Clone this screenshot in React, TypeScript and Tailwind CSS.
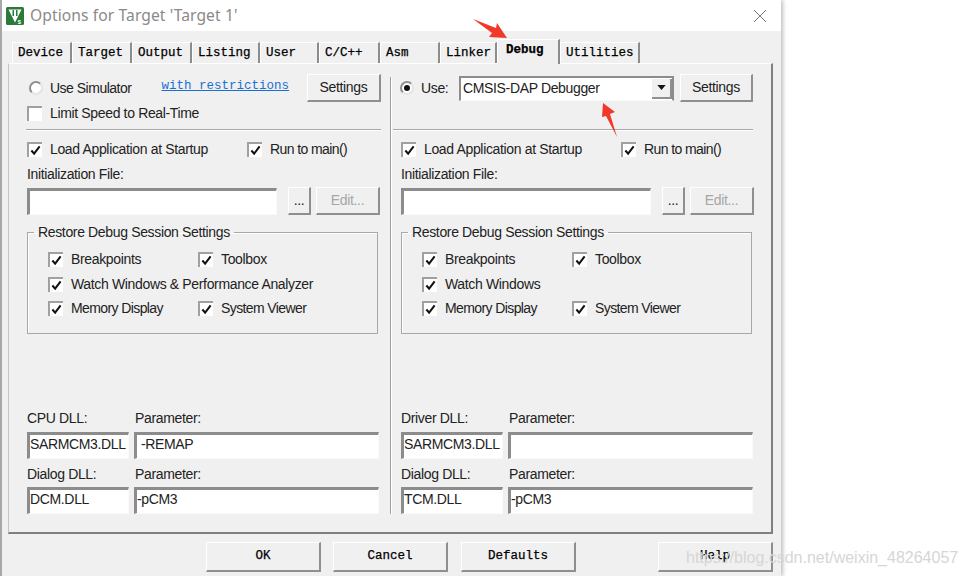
const ui = "font-['Liberation_Sans',Arial,sans-serif] text-[14px] tracking-[-0.35px] text-[#222]";
const mono = "font-['Liberation_Mono','Courier_New',monospace] text-[12.5px] text-black [-webkit-text-stroke:0.25px_#000]";

const tabs = [
  { name: "Device", w: "w-[60px]" },
  { name: "Target", w: "w-[60px]" },
  { name: "Output", w: "w-[60px]" },
  { name: "Listing", w: "w-[68px]" },
  { name: "User", w: "w-[59px]" },
  { name: "C/C++", w: "w-[61px]" },
  { name: "Asm", w: "w-[60px]" },
  { name: "Linker", w: "w-[57px]" },
  { name: "Debug", w: "w-[63px]", active: true },
  { name: "Utilities", w: "w-[80px]" },
];

function Tab({ name, w, active }: { name: string; w: string; active?: boolean }) {
  return (
    <div
      className={`${w} ${mono} flex items-center border-t border-l border-t-white border-l-white border-r-2 border-r-[#8c8c8c] ${
        active ? "relative z-10 h-[25px] -mb-px bg-[#f0f0f0] pb-[3px] pl-[8px] font-bold" : "h-[21px] pl-[5px]"
      }`}
    >
      {name}
    </div>
  );
}

function Check({ checked = true, tight, label }: { checked?: boolean; tight?: boolean; label: string }) {
  return (
    <label className={`${ui} ${tight ? "!tracking-[-0.6px]" : ""} flex items-center gap-[8px] whitespace-nowrap`}>
      <span className="flex h-[15px] w-[15px] shrink-0 items-center justify-center border-t-2 border-l-2 border-t-[#a0a0a0] border-l-[#a0a0a0] bg-white">
        {checked && (
          <svg viewBox="0 0 12 12" className="h-[11px] w-[11px]">
            <path d="M1.5 6 L4.5 9.5 L10.5 1.5" fill="none" stroke="#111" strokeWidth="2.2" />
          </svg>
        )}
      </span>
      {label}
    </label>
  );
}

function Radio({ on }: { on?: boolean }) {
  return (
    <span className="flex h-[14px] w-[14px] shrink-0 items-center justify-center rounded-full border-2 border-t-[#8f8f8f] border-l-[#8f8f8f] border-r-[#e4e4e4] border-b-[#e4e4e4] bg-white">
      {on && <span className="h-[6px] w-[6px] rounded-full bg-[#111]" />}
    </span>
  );
}

function Button({ className = "", font = ui, disabled, children }: { className?: string; font?: string; disabled?: boolean; children: React.ReactNode }) {
  return (
    <div
      className={`${font} ${disabled ? "!text-[#a6a6a6]" : ""} flex shrink-0 items-center justify-center border-t border-l border-t-white border-l-white border-r-2 border-b-2 border-r-[#8f8f8f] border-b-[#8f8f8f] ${className}`}
    >
      {children}
    </div>
  );
}

function Field({ className = "", value }: { className?: string; value?: string }) {
  return (
    <div
      className={`${ui} flex items-center overflow-hidden whitespace-nowrap border-t-[3px] border-l-[3px] border-t-[#8c8c8c] border-l-[#8c8c8c] border-r border-b border-r-[#fafafa] border-b-[#fafafa] bg-white pb-[4px] ${className}`}
    >
      {value}
    </div>
  );
}

function Rule({ className = "" }: { className?: string }) {
  return <div className={`h-[2px] border-t border-t-[#a8a8a8] bg-white ${className}`} />;
}

type DebugColumnProps = {
  head: React.ReactNode;
  watchLabel: string;
  firstDll: string;
  firstDllValue: string;
  firstParam?: string;
  dialogDllValue: string;
};

// one half of the Debug page: the simulator settings or the target driver settings
function DebugColumn({ head, watchLabel, firstDll, firstDllValue, firstParam, dialogDllValue }: DebugColumnProps) {
  return (
    <div className="flex w-[354px] shrink-0 flex-col">
      {head}
      <div className="mt-[10px] flex h-[16px] items-center">
        <div className="w-[220px]">
          <Check label="Load Application at Startup" />
        </div>
        <Check tight label="Run to main()" />
      </div>
      <div className={`${ui} mt-[9px] h-[16px] leading-[16px]`}>Initialization File:</div>
      <div className="mt-[5px] flex h-[28px] items-center">
        <Field className="h-[27px] w-[250px]" />
        <Button className="ml-[11px] h-[28px] w-[23px]">...</Button>
        <Button disabled className="ml-[5px] h-[28px] w-[64px]">Edit...</Button>
      </div>
      <fieldset className="mt-[9px] h-[110px] w-[351px] border border-[#a8a8a8] shadow-[inset_1px_1px_0_#fff]">
        <legend className={`${ui} ml-[6px] px-[4px] leading-[16px]`}>Restore Debug Session Settings</legend>
        <div className="pl-[20px]">
          <div className="mt-[11px] flex h-[16px] items-center">
            <div className="w-[150px]">
              <Check label="Breakpoints" />
            </div>
            <Check label="Toolbox" />
          </div>
          <div className="mt-[7px] h-[16px]">
            <Check label={watchLabel} />
          </div>
          <div className="mt-[10px] flex h-[16px] items-center">
            <div className="w-[150px]">
              <Check tight label="Memory Display" />
            </div>
            <Check tight label="System Viewer" />
          </div>
        </div>
      </fieldset>
      <div className={`${ui} mt-[76px] flex h-[16px] leading-[16px]`}>
        <span className="w-[108px]">{firstDll}</span>
        <span>Parameter:</span>
      </div>
      <div className="mt-[6px] flex h-[27px] gap-[5px]">
        <Field className="w-[102px]" value={firstDllValue} />
        <Field className={`w-[245px] ${firstParam ? "pl-[4px]" : ""}`} value={firstParam} />
      </div>
      <div className={`${ui} mt-[7px] flex h-[16px] leading-[16px]`}>
        <span className="w-[108px]">Dialog DLL:</span>
        <span>Parameter:</span>
      </div>
      <div className="mt-[5px] flex h-[27px] gap-[5px]">
        <Field className="w-[102px]" value={dialogDllValue} />
        <Field className="w-[245px]" value="-pCM3" />
      </div>
    </div>
  );
}

function SimulatorHead() {
  return (
    <>
      <div className="flex h-[28px] items-center">
        <span className="ml-[2px]">
          <Radio />
        </span>
        <span className={`${ui} !tracking-[-0.5px] ml-[7px] w-[112px]`}>Use Simulator</span>
        <span className={`${mono} !text-[#1a6fd0] [-webkit-text-stroke:0px] -mt-[3px] w-[146px] underline`}>with restrictions</span>
        <Button className="h-[28px] w-[74px]">Settings</Button>
      </div>
      <div className="mt-[1px] h-[16px]">
        <Check checked={false} label="Limit Speed to Real-Time" />
      </div>
      <Rule className="mt-[10px] -ml-[1px] w-[355px]" />
    </>
  );
}

function DriverHead() {
  return (
    <>
      <div className="-ml-[1px] flex h-[28px] items-center">
        <Radio on />
        <span className={`${ui} ml-[7px] w-[38px]`}>Use:</span>
        <div className="flex h-[25px] w-[215px] items-center border-t-2 border-l-2 border-t-[#8c8c8c] border-l-[#8c8c8c] border-r-2 border-b border-r-[#8c8c8c] border-b-[#fafafa] bg-white pl-[2px]">
          <span className={`${ui} flex-1`}>CMSIS-DAP Debugger</span>
          <div className="flex h-[20px] w-[20px] items-center justify-center border-r-2 border-b-2 border-r-[#8f8f8f] border-b-[#8f8f8f] bg-[#f0f0f0]">
            <svg viewBox="0 0 10 6" className="h-[5px] w-[9px]">
              <path d="M0 0 H10 L5 6 Z" fill="#111" />
            </svg>
          </div>
        </div>
        <Button className="ml-[6px] h-[28px] w-[73px]">Settings</Button>
      </div>
      <div className="mt-[1px] h-[16px]" />
      <Rule className="mt-[10px] -ml-[8px] w-[360px]" />
    </>
  );
}

export default function App() {
  return (
    <div className="relative h-[576px] w-[967px] overflow-hidden bg-white">
      <div className="flex h-[576px] w-[781px] flex-col border-l-2 border-l-[#a8a8a8] bg-[#f0f0f0] shadow-[2px_0_4px_rgba(0,0,0,0.25)]">
        {/* title bar */}
        <div className="flex h-[31px] shrink-0 items-center bg-white">
          <svg viewBox="0 0 18 18" className="ml-[4px] h-[18px] w-[18px]">
            <rect width="18" height="18" rx="1.5" fill="#2c7a3a" />
            <path d="M2.5 2.5 H15.5 L9 15.5 Z" fill="#fff" />
            <path d="M6.5 3 H8 V9 H6.5 Z M10 3 H11.5 V9 H10 Z" fill="#2c7a3a" />
            <text x="11.5" y="16.5" fontSize="6.5" fontWeight="700" fill="#fff" fontFamily="Liberation Sans">s</text>
          </svg>
          <span className="ml-[6px] font-['Noto_Sans',sans-serif] text-[15.6px] tracking-[0.1px] text-[#8a8a8a]">
            Options for Target 'Target 1'
          </span>
          <svg viewBox="0 0 12 12" className="ml-auto mr-[15px] h-[12px] w-[12px]">
            <path d="M0 0 L12 12 M12 0 L0 12" stroke="#777" strokeWidth="1" />
          </svg>
        </div>

        {/* tab strip */}
        <div className="mt-[8px] flex h-[24px] shrink-0 items-end pl-[10px]">
          {tabs.map((t) => (
            <Tab key={t.name} {...t} />
          ))}
        </div>

        {/* Debug page */}
        <div className="ml-[6px] flex h-[471px] w-[765px] shrink-0 border-t border-l border-t-white border-l-[#c4c4c4] border-r-2 border-b-2 border-r-[#808080] border-b-[#808080] pt-[10px] pl-[18px]">
          <DebugColumn
            head={<SimulatorHead />}
            watchLabel="Watch Windows & Performance Analyzer"
            firstDll="CPU DLL:"
            firstDllValue="SARMCM3.DLL"
            firstParam="-REMAP"
            dialogDllValue="DCM.DLL"
          />
          <div className="mt-[3px] ml-[9px] h-[437px] w-[2px] border-l border-l-[#a0a0a0] bg-white" />
          <div className="ml-[9px]">
            <DebugColumn
              head={<DriverHead />}
              watchLabel="Watch Windows"
              firstDll="Driver DLL:"
              firstDllValue="SARMCM3.DLL"
              dialogDllValue="TCM.DLL"
            />
          </div>
        </div>

        {/* dialog buttons */}
        <div className="mt-[8px] flex shrink-0 pl-[204px]">
          <Button font={mono} className="h-[30px] w-[115px]">OK</Button>
          <Button font={mono} className="ml-[12px] h-[30px] w-[115px]">Cancel</Button>
          <Button font={mono} className="ml-[13px] h-[30px] w-[115px]">Defaults</Button>
          <Button font={mono} className="ml-[82px] h-[30px] w-[115px]">Help</Button>
        </div>
      </div>

      {/* red annotation arrows */}
      <svg viewBox="0 0 967 576" className="pointer-events-none absolute inset-0 h-[576px] w-[967px]">
        <path d="M473 19 L496 28 L497 23 L507 38 L489 37 L492 33 Z" fill="#f0392b" />
        <path d="M603 103 L615 112 L610 114 L617 137 L606 116 L602 117 Z" fill="#f0392b" />
      </svg>

      {/* blog watermark */}
      <span className="absolute left-[686px] top-[546px] font-['Liberation_Sans',sans-serif] text-[16px] whitespace-nowrap text-[#d6d6d6]">
        https://blog.csdn.net/weixin_48264057
      </span>
    </div>
  );
}
